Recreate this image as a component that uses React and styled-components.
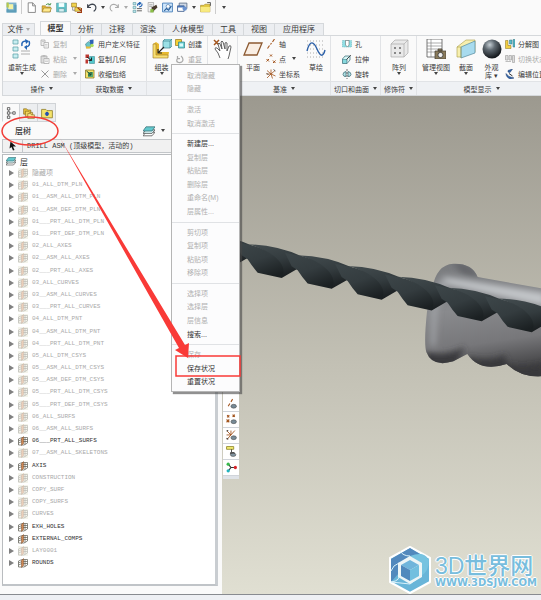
import React from 'react';
import styled, { createGlobalStyle, css } from 'styled-components';

const GlobalStyle = createGlobalStyle`
  * {
    box-sizing: border-box;
  }

  body {
    margin: 0;
    background: #fafafa;
    color: #3a3a3a;
    font-family: "Liberation Sans", "Noto Sans CJK SC", sans-serif;
    font-size: 7px;
  }

  button, select {
    margin: 0;
    padding: 0;
    border: 0;
    background: none;
    color: inherit;
    font: inherit;
  }

  svg {
    display: block;
    flex: none;
  }
`;

/* ---------- icons ---------- */

const art = {
  app: <><path d="M1 1h18v18H1z" fill="#7fb3cf" /><path d="M4 4h9v9H4z" fill="#f4f3a4" /><path d="M1 13h4v2h10V5h4v14H1z" fill="#5d9db8" /><path d="M1 1h4v9H1z" fill="#b6c84d" /></>,
  file: <path d="M4 1.500h8l5 5V19H4zM12 1.500V7h5" fill="#fff" stroke="#777" strokeWidth="1.500" />,
  open: <><path d="M2 7h6l2 2h7v9H2z" fill="#e8b93a" stroke="#8c6d1b" /><path d="M5 11h14l-3 7H2z" fill="#ffe98c" stroke="#8c6d1b" /><path d="M9 5q4-4 8 0l1-3M17 5l-4 0" stroke="#3b8a3b" fill="none" strokeWidth="1.500" /></>,
  save: <><path d="M1 2h18v16H1z" fill="#5fc4c9" stroke="#4f8f98" /><path d="M5 2h10v7H5z" fill="#f2ffff" /><path d="M5 12h10v6H5z" fill="#d5eef0" stroke="#4f8f98" /></>,
  tree: <><path d="M1 2h9v7H1zM7 10h10v7H7z" fill="#f0d24d" stroke="#8c6d1b" /><path d="M12 10l7 7M19 11v8h-8" stroke="#a03c14" fill="none" strokeWidth="2" /><path d="M3 9v6h4" stroke="#555" fill="none" /></>,
  undo: <path d="M3 4v6h6M3 10Q6 4 12 4q6 1 6 7 0 4-4 6" fill="none" stroke="#3f4650" strokeWidth="2.200" />,
  redo: <path d="M17 4v6h-6M17 10Q14 4 8 4q-6 1-6 7 0 4 4 6" fill="none" stroke="#aaa" strokeWidth="2" />,
  regen: <><path d="M2 1h5v4H2zM2 8h5v4H2zM2 15h5v4H2z" fill="#bfe9ee" stroke="#4a8b94" /><path d="M9 12h9M9 16h9" stroke="#444" strokeWidth="1.500" /><path d="M10 7q0-5 5-5M13 0l3 2-3 3M18 3q1 5-5 6" fill="none" stroke="#2464b4" strokeWidth="2" /></>,
  pencil: <><path d="M2 1h10v17H2z" fill="#f1f1f1" stroke="#888" /><path d="M4 5h6M4 8h6" stroke="#777" /><path d="M8 10l9-5 2 5-9 8z" fill="#4a3c2f" /><path d="M6 13h6v6H6z" fill="#8abf47" /></>,
  fit: <><path d="M1 2h18v16H1z" fill="#cfe6fb" stroke="#3c77b5" strokeWidth="1.500" /><circle cx="11" cy="8" r="3.500" fill="#fff" stroke="#2b5f9a" /><path d="M4 16l4-4 4 3 5-8" fill="none" stroke="#2b5f9a" strokeWidth="2" /></>,
  windows: <><path d="M4 2h14v10H4z" fill="#cfd9e6" stroke="#5a6c86" strokeWidth="1.500" /><path d="M1 7h12v10H1z" fill="#fff" stroke="#38588a" strokeWidth="1.500" /><path d="M1 7h12v3H1z" fill="#4773b6" /><circle cx="14" cy="12" r="4" fill="#6b93cf" /></>,
  folder: <><path d="M1 6h6l2-2h9v14H1z" fill="#e2c843" stroke="#9b7d20" /><path d="M1 9h17v9H1z" fill="#f8ea80" /><path d="M13 1h6v6" fill="none" stroke="#444" strokeWidth="1.500" /></>,
  copy: <><path d="M2 2h8v11H2z" fill="#eee" stroke="#aaa" strokeWidth="1.500" /><path d="M8 7h9v11H8z" fill="#f7f7f7" stroke="#aaa" strokeWidth="1.500" /><path d="M10 11h5M10 14h5M4 5h4" stroke="#aaa" /></>,
  paste: <><path d="M2 4h12v14H2z" fill="#ddd" stroke="#aaa" strokeWidth="1.500" /><path d="M5 2h6v4H5z" fill="#bbb" /><path d="M8 9h10v10H8z" fill="#fafafa" stroke="#aaa" strokeWidth="1.500" /><path d="M10 12h6M10 15h6" stroke="#aaa" /></>,
  cross: <path d="M3 3l14 14M17 3L3 17" stroke="#999" strokeWidth="2" />,
  feature: <><path d="M1 10l6-5 6 4-2 8-8 1z" fill="#69c3c8" stroke="#41727c" /><path d="M9 2l8-1v8l-6 3z" fill="#2c62b4" /><path d="M2 15h9v4H2z" fill="#e7bb36" /><circle cx="14" cy="13" r="3.500" fill="#a9dd5a" /></>,
  copyGeo: <><path d="M1 1h7v7H1zM1 11h5v8H1z" fill="#bd3830" /><path d="M9 5h10v14H9z" fill="#54c7cb" stroke="#317f88" /><path d="M4 6l9 7M13 7v6H7" stroke="#222" strokeWidth="2" fill="none" /></>,
  shrink: <><path d="M1 2h17v16H1z" fill="#f4e36c" stroke="#86711f" strokeWidth="1.500" /><path d="M6 6h10v10H6z" fill="#58a86f" /><path d="M3 4l9 8M12 6v6H6" stroke="#1a4734" strokeWidth="2" fill="none" /></>,
  create: <><path d="M1 1h12v12H1z" fill="#f4cf34" stroke="#9b7d20" strokeWidth="1.500" /><path d="M7 6h12v12H7z" fill="#6cd2d6" stroke="#38858b" strokeWidth="1.500" /><path d="M9 9h7v6H9z" fill="#d8fafa" /></>,
  repeat: <path d="M5 4v5h5M5 9Q1 15 7 17q8 1 9-5 0-5-4-8" fill="none" stroke="#aaa" strokeWidth="2.500" />,
  axis: <path d="M3 19l4-6M9 11l2-3M13 6l4-6" stroke="#a3541c" strokeWidth="2.200" />,
  points: <path d="M8 1l4 4m0-4L8 5M1 10l5 5m0-5l-5 5M14 13l5 5m0-5l-5 5" stroke="#a3541c" strokeWidth="2" />,
  csys: <><path d="M10 10L2 3M10 10l8-7M10 10l9 4M10 10l-8 8M10 10l3 9M10 10H1M10 10V1" stroke="#a3541c" strokeWidth="1.600" /><path d="M1 8l4 4M15 1l4 3" stroke="#333" strokeWidth="1.500" /></>,
  hole: <><path d="M1 3h18v13H1z" fill="#91dfe5" stroke="#5eb1bb" strokeDasharray="3 1" /><path d="M7 3h7v9l-3 4-4-4z" fill="#fff" stroke="#555" /></>,
  extrude: <><path d="M1 10h9v9H1z" fill="#86d9de" stroke="#40727c" strokeWidth="1.500" /><path d="M1 10l5-6h10l-6 6M10 19l6-7V4" fill="#d6f6f6" stroke="#40727c" strokeWidth="1.500" /><path d="M9 11l9-9" stroke="#333" strokeWidth="1.500" /></>,
  revolve: <><path d="M8 5Q2 6 2 11q1 5 6 4V5M12 5q6 1 6 6-1 5-6 4z" fill="#b2e3e6" stroke="#3d6b76" strokeWidth="1.500" /><path d="M10 0v20" stroke="#444" strokeDasharray="4 2" strokeWidth="1.500" /></>,
  explode: <><path d="M1 3h5v10h6v6H1z" fill="#f2cf43" stroke="#876b1a" /><path d="M9 2h5v8H9zM16 1h4v15h-4z" fill="#58bbc8" stroke="#33727e" /></>,
  toggle: <path d="M1 3h5v9H1zM8 3h5v9H8zM15 3h4v14h-4zM1 15h11" fill="#ddd" stroke="#aaa" strokeWidth="1.500" />,
  editPos: <><path d="M6 3l9-3-5 7-4-1zM2 9l6 6 10 3-7 2Q2 17 2 9z" fill="#3367ab" stroke="#1e3b6d" /><path d="M8 9l7 5" stroke="#333" strokeWidth="2" /></>,
  layers: <><path d="M5 12h15l-5 6H0z" fill="#fff" stroke="#444" strokeWidth="1.200" /><path d="M5 8h15l-5 6H0z" fill="#d7f4f5" stroke="#444" strokeWidth="1.200" /><path d="M5 3h15l-5 7H0z" fill="#63c8cd" stroke="#356b72" strokeWidth="1.200" /></>,
  structure: <><path d="M6 3v14M6 10h9" stroke="#555" /><path d="M4 1h4v4H4zM4 8h4v4H4zM4 15h4v4H4zM13 8h4v4h-4z" fill="#fff" stroke="#444" strokeWidth="1.300" /></>,
  folders: <><path d="M1 3h5l2 2h5v7H1z" fill="#e8c23a" stroke="#7b621a" /><path d="M4 7h5l2 2h5v7H4z" fill="#f1d45a" stroke="#7b621a" /><path d="M8 11h5l1 2h5v6H8z" fill="#f9e88d" stroke="#7b621a" /></>,
  favorite: <><path d="M1 4h7l2 2h9v12H1z" fill="#f5e36a" stroke="#8c7a25" strokeWidth="1.300" /><path d="M10 8v7M6.500 11.500h7M8 9l4 5M12 9l-4 5" stroke="#2450b0" strokeWidth="1.800" /></>,
  cursor: <path d="M5 1l11 10h-6l3 7-3 1-3-7-4 3z" fill="#111" />,
  layer: <><path d="M1 6l7-3h11v11l-7 4H1zM1 10l7-3h11M1 14l7-3h11M14 3v14" fill="none" stroke="#4d4d42" strokeWidth="1.300" /><path d="M7 5l4-4v14l-4 4z" fill="#cf8753" stroke="#7d4f2d" /></>,
  eyeAxis: <><path d="M4 15l3-5M9 7l3-5" stroke="#a3541c" strokeWidth="2" /><ellipse cx="14" cy="15" rx="5" ry="3.500" fill="#778b97" stroke="#444" /></>,
  eyePoints: <><path d="M2 2l4 4m0-4L2 6M12 1l4 4m0-4l-4 4M1 10l5 5m0-5l-5 5" stroke="#a3541c" strokeWidth="2" /><ellipse cx="14" cy="14" rx="5" ry="3.500" fill="#778b97" stroke="#444" /></>,
  eyeCsys: <><path d="M9 9L2 2M9 9l7-8M9 9l-7 8M9 9H1M9 9V1" stroke="#a3541c" strokeWidth="1.600" /><path d="M1 2l3-1M1 15l3 2" stroke="#333" strokeWidth="2" /><ellipse cx="14" cy="14" rx="5" ry="3.500" fill="#778b97" stroke="#444" /></>,
  eyePlane: <><path d="M1 1h13v5H1z" fill="#f3ed73" stroke="#8e8428" strokeWidth="1.500" /><path d="M10 6v6" stroke="#333" strokeWidth="1.500" /><path d="M8 11h7l2 4H7z" fill="#555" /><ellipse cx="13" cy="16" rx="5" ry="3" fill="#8295a1" stroke="#444" /></>,
  spin: <><path d="M4 4l5 6-5 6M9 10h8" stroke="#333" strokeWidth="2" fill="none" /><circle cx="4" cy="4" r="3" fill="#37b94a" /><circle cx="4" cy="16" r="3" fill="#22b2bd" /><circle cx="17" cy="10" r="3" fill="#d8232a" /></>,
  /* large ribbon icons */
  regenBig: <><path d="M1 1h5v4H1zM1 8h5v4H1zM1 15h5v4H1z" fill="#c8eef1" stroke="#62a5ac" strokeWidth=".8" /><path d="M9 12h9M9 15h9" stroke="#999" strokeWidth=".8" /><path d="M10 7q-1-5 4-5M17 2q2 5-3 6" fill="none" stroke="#2464b4" strokeWidth="1.500" /><path d="M13 0l4 2-3 3zM15 6v5l-3-3z" fill="#2464b4" /></>,
  assemble: <><path d="M1 5l3-2 3 2v8h10l-1 6H1z" fill="#e7b92f" /><path d="M1 5h3v11h12v3H1z" fill="#f8df70" stroke="#9b7726" strokeWidth=".6" /><path d="M11 2l2-2h7v7l-2 2h-7z" fill="#9ae0e6" stroke="#3c7f8a" strokeWidth=".7" /><path d="M11 2h7v7M18 2l2-2" fill="none" stroke="#3c7f8a" strokeWidth=".7" /><path d="M12 8l-6 6M6 10v4h4" fill="none" stroke="#222" strokeWidth="1.100" /></>,
  hand: <><path d="M1 1l5 5M6 1L1 6" stroke="#a3541c" strokeWidth="1.500" /><path d="M7 19l-2-5-3-4q0-2 2-1l3 3-2-7q1-2 2 0l2 5-1-7q1-2 2 0l2 7V4q1-1 2 0v8l2-5q2-1 2 1l-2 9-1 3" fill="#fff" stroke="#555" strokeWidth=".9" /></>,
  plane: <path d="M6 4h13l-5 12H1z" fill="#f9eee4" stroke="#8c5a32" strokeWidth="1.300" />,
  sketch: <><path d="M1 2h18M1 6h18M1 10h18M1 14h18M1 18h18" stroke="#999" strokeWidth=".8" strokeDasharray="1 2" /><path d="M1 12C4 0 8 3 11 10s6 9 8 1" fill="none" stroke="#2b5fa8" strokeWidth="1.400" /></>,
  pattern: <><path d="M2 5l4-4h13v13l-4 4H2z" fill="#e9e9e9" stroke="#aaa" strokeWidth=".7" /><path d="M2 5h13v13M15 5l4-4" fill="none" stroke="#aaa" strokeWidth=".7" /><path d="M5 8h2v2H5zM10 8h2v2h-2zM5 13h2v2H5zM10 13h2v2h-2z" fill="#888" /></>,
  viewManager: <><path d="M1 0h15v18H1z" fill="#fff" stroke="#555" strokeWidth=".8" /><path d="M1 4h15M1 7h15M1 10h15M1 13h15M5 0v18" stroke="#777" strokeWidth=".6" /><path d="M9 12h11v8H9zM12 10h4v2h-4z" fill="#8a7b5b" stroke="#443e30" strokeWidth=".7" /><circle cx="14.500" cy="16" r="2.600" fill="#eee" stroke="#333" strokeWidth=".8" /></>,
  section: <><path d="M1 8l9-7h9v12L5 18H1z" fill="#f7efae" stroke="#a89a45" strokeWidth=".6" /><path d="M5 8l14-6v12L5 19z" fill="#a8dbee" stroke="#55899e" strokeWidth=".7" /><path d="M1 8h4v11" fill="none" stroke="#a89a45" strokeWidth=".6" /></>,
  sphere: <><defs><radialGradient id="ball" cx=".38" cy=".28" r=".7"><stop offset="0" stopColor="#c5ced4" /><stop offset=".4" stopColor="#606a72" /><stop offset="1" stopColor="#15191d" /></radialGradient></defs><circle cx="10" cy="10" r="9.500" fill="url(#ball)" /></>,
};

const Icon = ({ name, size = 10 }) => (
  <svg width={size} height={size} viewBox="0 0 20 20" fill="none" aria-hidden="true">
    {art[name]}
  </svg>
);

const Caret = styled.span`
  width: 0;
  height: 0;
  border: 2px solid transparent;
  border-top: 3px solid ${({ $muted }) => ($muted ? '#aaa' : '#444')};
  border-bottom: 0;
`;

/* ---------- page ---------- */

const Page = styled.div`
  position: relative;
  display: flex;
  flex-direction: column;
  min-height: 100vh;
  overflow: hidden;
`;

const QuickBar = styled.header`
  display: flex;
  align-items: center;
  gap: 4px;
  height: 14px;
  margin-bottom: 7px;
  padding-left: 6px;

  button {
    display: flex;
  }
`;

const Divider = styled.span`
  width: 1px;
  height: 14px;
  margin-right: ${({ $wide }) => ($wide ? '2px' : '0')};
  background: #ccc;
`;

const TabStrip = styled.nav`
  display: flex;
  align-items: flex-end;
  height: 14px;
  padding-left: 2px;
`;

const Tab = styled.button`
  display: flex;
  align-items: center;
  justify-content: center;
  gap: 2px;
  width: ${({ $wide }) => ($wide ? '49px' : '31px')};
  height: 12px;
  border-top: 1px solid #d5d8db;
  border-right: 1px solid #d5d8db;
  background: #eceef1;
  font-size: 8px;
  line-height: 10px;
  white-space: nowrap;

  ${({ $file }) => $file && css`
    width: 33px;
    margin-right: 5px;
    border-left: 1px solid #d5d8db;
  `}

  ${({ $active }) => $active && css`
    height: 14px;
    border-left: 1px solid #d5d8db;
    background: #fafafa;
    font-weight: 700;
  `}
`;

const Ribbon = styled.section`
  display: flex;
  height: 61px;
  margin-left: 2px;
  border: 1px solid #d5d8db;
  border-right: 0;
  overflow: hidden;
`;

const Group = styled.div`
  display: flex;
  flex-direction: column;
  flex: ${({ $width }) => ($width ? `0 0 ${$width}px` : '1 0 124px')};
  border-right: 1px solid #e1e3e6;
`;

const GroupBody = styled.div`
  display: flex;
  flex: 1;
  gap: 3px;
  padding-left: ${({ $indent }) => $indent || 4}px;
`;

const GroupTitle = styled.div`
  display: flex;
  align-items: center;
  justify-content: center;
  gap: 4px;
  height: 14px;
  border-top: 1px solid #e1e3e6;
  background: #eff1f4;
  font-size: 7px;
  white-space: nowrap;
`;

const BigButton = styled.button`
  display: flex;
  flex-direction: column;
  align-items: center;
  width: ${({ $width }) => $width || 20}px;
  padding-top: 3px;
  line-height: 8px;
  white-space: nowrap;

  svg {
    margin-bottom: 5px;
  }
`;

const Column = styled.div`
  display: flex;
  flex-direction: column;
`;

const SmallButton = styled.button`
  display: flex;
  flex: 1;
  align-items: center;
  gap: 3px;
  color: ${({ disabled }) => (disabled ? '#aaa' : '#3a3a3a')};
  white-space: nowrap;

  ${Caret} {
    margin-left: 3px;
  }
`;

const Workspace = styled.main`
  display: flex;
  flex: 1;
`;

const Sidebar = styled.aside`
  display: flex;
  flex-direction: column;
  flex: 0 0 222px;
  padding: 7px 4px 8px 2px;
`;

const PanelTabs = styled.div`
  display: flex;
  height: 19px;
  flex: none;
`;

const PanelTab = styled.button`
  display: flex;
  align-items: center;
  justify-content: center;
  width: 18px;
  border: 1px solid #d0d3d6;
  border-left-width: ${({ $active }) => ($active ? '1px' : '0')};
  border-bottom-color: ${({ $active }) => ($active ? '#fafafa' : '#d0d3d6')};
  background: ${({ $active }) => ($active ? '#fafafa' : '#eceef0')};
`;

const PanelHead = styled.div`
  display: flex;
  align-items: center;
  gap: 6px;
  height: 17px;
  padding: 0 43px 0 13px;

  h2 {
    flex: 1;
    margin: 0;
    font-size: 8px;
    font-weight: 500;
  }
`;

const ModelRow = styled.div`
  display: flex;
  height: 14px;
  border: 1px solid #c3c6c9;
  background: #f1f1f1;

  button {
    display: flex;
    align-items: center;
    justify-content: center;
    width: 20px;
    border-right: 1px solid #c3c6c9;
  }
`;

const ModelSelect = styled.select`
  flex: 1;
  appearance: none;
  padding-left: 4px;
  font-family: "Liberation Mono", "Noto Sans CJK SC", monospace;
  font-size: 7px;
`;

const Tree = styled.ul`
  display: flex;
  flex: 1;
  flex-direction: column;
  margin: 1px 0 0;
  padding: 0 0 15px;
  border: 1px solid #b9bcbf;
  border-right: 3px solid #c9cdd1;
  border-bottom: 2px solid #c0c4c8;
  background: #fff;
  list-style: none;
  font-family: "Liberation Mono", "Noto Sans CJK SC", monospace;
  font-size: 6px;
`;

const TreeRoot = styled.li`
  display: flex;
  align-items: center;
  gap: 4px;
  height: 12px;
  padding-left: 3px;
  font-size: 8px;
`;

const TreeRow = styled.li`
  display: flex;
  flex: 1 1 12px;
  align-items: center;
  gap: 4px;
  padding-left: 6px;
  color: ${({ $shown }) => ($shown ? '#333' : '#aaa')};
  font-size: ${({ $chinese }) => ($chinese ? '7px' : '6px')};
  line-height: 8px;

  svg {
    background: ${({ $shown }) => ($shown ? 'none' : '#e6e6cf')};
    opacity: ${({ $shown }) => ($shown ? 1 : 0.4)};
  }
`;

const Expander = styled.button`
  width: 0;
  height: 0;
  border: 3px solid transparent;
  border-left: 5px solid #808080;
  border-right: 0;
`;

const Viewport = styled.section`
  position: relative;
  flex: 1;
  min-width: 0;
  background: linear-gradient(#9c998f, #c3c1b5 55%, #e0dfd2);
  overflow: hidden;
`;

const Model = styled.svg`
  position: absolute;
  top: 0;
  left: 0;
  width: 100%;
`;

const DisplayBar = styled.div`
  position: absolute;
  top: 296px;
  left: 1px;
  width: 16px;
  padding-top: 4px;
  border-bottom: 3px solid #dfe3e8;
  background: #fff;

  button {
    display: flex;
    align-items: center;
    justify-content: center;
    width: 16px;
    height: 16px;
    border-bottom: 1px solid #d0d4da;
  }
`;

const Watermark = styled.div`
  position: absolute;
  right: 4px;
  bottom: 0;
  display: flex;
  align-items: center;
  gap: 3px;
  color: #78bddd;
  text-shadow: 1px 0 #fff, -1px 0 #fff, 0 1px #fff, 0 -1px #fff;
  white-space: nowrap;

  strong {
    display: block;
    font-size: 23px;
    font-weight: 500;
    line-height: 24px;
  }

  small {
    display: block;
    font: 700 10px/9px "DejaVu Sans", sans-serif;
  }
`;

const StatusBar = styled.footer`
  height: 6px;
  border-top: 1px solid #888b90;
  background: #eef0f4;
`;

const Menu = styled.div`
  position: absolute;
  top: 64px;
  left: 171px;
  display: flex;
  flex-direction: column;
  width: 69px;
  height: 328px;
  padding: 4px 0 2px;
  border: 1px solid #b5b5b5;
  background: #fcfcfd;
  box-shadow: 2px 2px 1px rgba(70, 70, 70, 0.6);

  hr {
    flex: 0 0 1px;
    width: 100%;
    margin: 3px 0;
    border: 0;
    background: #e0e2e5;
  }
`;

const MenuItem = styled.button`
  flex: 1;
  padding-left: 15px;
  color: ${({ disabled }) => (disabled ? '#b0b0b0' : '#333')};
  font-size: 7px;
  line-height: 8px;
  text-align: left;
`;

const Marks = styled.svg`
  position: absolute;
  top: 0;
  left: 0;
  pointer-events: none;
`;

/* ---------- data ---------- */

const tabs = ['分析', '注释', '渲染', '人体模型', '工具', '视图', '应用程序'];

const layers = [
  '隐藏项', '01_ALL_DTM_PLN', '01__ASM_ALL_DTM_PLN', '01__ASM_DEF_DTM_PLN',
  '01___PRT_ALL_DTM_PLN', '01___PRT_DEF_DTM_PLN', '02_ALL_AXES', '02__ASM_ALL_AXES',
  '02___PRT_ALL_AXES', '03_ALL_CURVES', '03__ASM_ALL_CURVES', '03___PRT_ALL_CURVES',
  '04_ALL_DTM_PNT', '04__ASM_ALL_DTM_PNT', '04___PRT_ALL_DTM_PNT', '05_ALL_DTM_CSYS',
  '05__ASM_ALL_DTM_CSYS', '05__ASM_DEF_DTM_CSYS', '05___PRT_ALL_DTM_CSYS',
  '05___PRT_DEF_DTM_CSYS', '06_ALL_SURFS', '06__ASM_ALL_SURFS', '06___PRT_ALL_SURFS',
  '07__ASM_ALL_SKELETONS', 'AXIS', 'CONSTRUCTION', 'COPY_SURF', 'COPY_SURFS', 'CURVES',
  'EXH_HOLES', 'EXTERNAL_COMPS', 'LAY0001', 'ROUNDS',
];

const shownLayers = ['06___PRT_ALL_SURFS', 'AXIS', 'EXH_HOLES', 'EXTERNAL_COMPS', 'ROUNDS'];

const menuGroups = [
  ['取消隐藏', '隐藏'],
  ['激活', '取消激活'],
  ['新建层...', '复制层', '粘贴层', '删除层', '重命名(M)', '层属性...'],
  ['剪切项', '复制项', '粘贴项', '移除项'],
  ['选择项', '选择层', '层信息', '搜索...'],
  ['保存', '保存状况', '重置状况'],
];

const enabledItems = ['新建层...', '搜索...', '保存状况', '重置状况'];

/* ---------- parts ---------- */

const Quick = ({ icon, label }) => (
  <button aria-label={label}><Icon name={icon} size={11} /></button>
);

const Small = ({ icon, children, caret, disabled }) => (
  <SmallButton disabled={disabled}>
    <Icon name={icon} size={10} />
    {children}
    {caret && <Caret $muted={disabled} />}
  </SmallButton>
);

const Big = ({ icon, children, caret, width }) => (
  <BigButton $width={width} aria-label={children ? undefined : icon}>
    <Icon name={icon} size={20} />
    {children}
    {caret && <Caret />}
  </BigButton>
);

const RibbonGroup = ({ title, width, indent, children }) => (
  <Group $width={width}>
    <GroupBody $indent={indent}>{children}</GroupBody>
    <GroupTitle>{title && <>{title}<Caret /></>}</GroupTitle>
  </Group>
);

const twists = [-1, 0, 1, 2, 3, 4, 5];

const DrillModel = () => (
  <Model viewBox="222 96 319 498" aria-label="DRILL">
    <defs>
      <linearGradient id="body" x1="0" y1="0" x2=".15" y2="1">
        <stop offset="0" stopColor="#77797c" />
        <stop offset=".45" stopColor="#898a8d" />
        <stop offset=".75" stopColor="#77777a" />
        <stop offset="1" stopColor="#424244" />
      </linearGradient>
      <linearGradient id="front" x1=".2" y1="0" x2=".7" y2="1">
        <stop offset="0" stopColor="#3c4548" />
        <stop offset=".5" stopColor="#343c3f" />
        <stop offset="1" stopColor="#1b2022" />
      </linearGradient>
      <linearGradient id="back" x1=".2" y1="0" x2=".6" y2="1">
        <stop offset="0" stopColor="#424b4e" />
        <stop offset=".5" stopColor="#343c3f" />
        <stop offset="1" stopColor="#191d1f" />
      </linearGradient>
      <filter id="soft"><feGaussianBlur stdDeviation="9" /></filter>
      <clipPath id="shell">
        <path d="M592 175Q604 104 655 101Q712 99 728 141L930 177V438Q860 446 815 402Q735 428 697 372L655 394Q592 413 574 366Q566 340 576 245Z" />
      </clipPath>
    </defs>
    <g transform="translate(235 230) scale(.3333)">
      <g clipPath="url(#shell)">
        <path d="M560 90H930V450H560z" fill="url(#body)" />
        <g filter="url(#soft)">
          <path d="M625 140L930 190V228L620 160z" fill="#c3c6c9" />
          <path d="M592 190Q615 140 640 150L606 240 600 350 588 345z" fill="#a2a4a8" />
          <path d="M650 95Q715 96 735 145L680 130z" fill="#626467" />
          <path d="M570 365Q630 385 690 350L660 410H570zM700 380Q760 400 810 375L820 430H700zM815 405Q870 420 930 400V455H815z" fill="#38383a" />
        </g>
      </g>
      {twists.map((n) => (
        <g key={n} transform={`translate(${n * 150} ${n * 32.5})`}>
          <path d="M38 43Q125 45 200 79L206 108 185 118 140 144C140 105 105 57 38 43Z" fill="url(#back)" />
          <path d="M0 36L45 45C105 57 165 105 140 144L68 128Q52 110 38 88L20 76Z" fill="url(#front)" />
        </g>
      ))}
    </g>
  </Model>
);

const Logo = () => (
  <svg width="44" height="48" viewBox="0 0 44 48" aria-hidden="true">
    <path d="M22 1l20 11v24L22 47 2 36V12z" fill="#69b5d8" stroke="#fff" strokeWidth="2" strokeLinejoin="round" />
    <path d="M22 2L3 13v23l8-9V17l11-7 18 3z" fill="#5289bd" />
    <path d="M40 13Q36 5 22 10l11 7v13q8-4 8-17z" fill="#77c3e0" />
    <path d="M33 17v13l-11 8-19-2q10-1 8-9M11 17Q5 19 3 25M22 10Q15 10 12 5" fill="none" stroke="#d9f1fa" />
    <path d="M22 10l12 7v14l-12 7-12-7V17z" fill="#edf5f6" />
    <path d="M22 14l9 5-9 5-9-5z" fill="#70b5db" />
    <path d="M13 19l9 5v11l-9-5z" fill="#5089bd" />
    <path d="M31 19l-9 5v11l9-5z" fill="#72bfdf" />
  </svg>
);

const App = () => (
  <Page>
    <GlobalStyle />
    <QuickBar>
      <Quick icon="app" label="应用" />
      <Divider />
      <Quick icon="file" label="新建" />
      <Quick icon="open" label="打开" />
      <Quick icon="save" label="保存" />
      <Quick icon="tree" label="关闭" />
      <Quick icon="undo" label="撤消" />
      <Caret />
      <Quick icon="redo" label="重做" />
      <Caret $muted />
      <Quick icon="regen" label="重新生成" />
      <Quick icon="pencil" label="编辑" />
      <Quick icon="fit" label="查找" />
      <Quick icon="windows" label="窗口" />
      <Caret />
      <Quick icon="folder" label="工作目录" />
      <Divider $wide />
      <Caret />
    </QuickBar>

    <TabStrip>
      <Tab $file>文件<Caret $muted /></Tab>
      <Tab $active>模型</Tab>
      {tabs.map((tab) => (
        <Tab key={tab} $wide={tab.length > 2}>{tab}</Tab>
      ))}
    </TabStrip>

    <Ribbon>
      <RibbonGroup title="操作" width={78}>
        <Big icon="regenBig" width={30} caret>重新生成</Big>
        <Column>
          <Small icon="copy" disabled>复制</Small>
          <Small icon="paste" disabled caret>粘贴</Small>
          <Small icon="cross" disabled caret>删除</Small>
        </Column>
      </RibbonGroup>
      <RibbonGroup title="获取数据" width={66}>
        <Column>
          <Small icon="feature">用户定义特征</Small>
          <Small icon="copyGeo">复制几何</Small>
          <Small icon="shrink">收缩包络</Small>
        </Column>
      </RibbonGroup>
      <RibbonGroup width={61}>
        <Big icon="assemble" width={21} caret>组装</Big>
        <Column>
          <Small icon="create">创建</Small>
          <Small icon="repeat" disabled>重复</Small>
          <SmallButton disabled aria-label="镜像元件" />
        </Column>
      </RibbonGroup>
      <RibbonGroup width={30} indent={5}>
        <Big icon="hand" />
      </RibbonGroup>
      <RibbonGroup title="基准" width={93} indent={5}>
        <Big icon="plane">平面</Big>
        <Column>
          <Small icon="axis">轴</Small>
          <Small icon="points" caret>点</Small>
          <Small icon="csys">坐标系</Small>
        </Column>
        <Big icon="sketch" width={26}>草绘</Big>
      </RibbonGroup>
      <RibbonGroup title="切口和曲面" width={50} indent={11}>
        <Column>
          <Small icon="hole">孔</Small>
          <Small icon="extrude">拉伸</Small>
          <Small icon="revolve">旋转</Small>
        </Column>
      </RibbonGroup>
      <RibbonGroup title="修饰符" width={36} indent={8}>
        <Big icon="pattern" caret>阵列</Big>
      </RibbonGroup>
      <RibbonGroup title="模型显示" indent={4}>
        <Big icon="viewManager" width={30} caret>管理视图</Big>
        <Big icon="section" width={24} caret>截面</Big>
        <Big icon="sphere" width={21}>
          外观<br />库 ▾
        </Big>
        <Column>
          <Small icon="explode">分解图</Small>
          <Small icon="toggle" disabled>切换状态</Small>
          <Small icon="editPos">编辑位置</Small>
        </Column>
      </RibbonGroup>
    </Ribbon>

    <Workspace>
      <Sidebar>
        <PanelTabs>
          <PanelTab $active aria-label="模型树"><Icon name="structure" size={12} /></PanelTab>
          <PanelTab aria-label="文件夹"><Icon name="folders" size={12} /></PanelTab>
          <PanelTab aria-label="收藏夹"><Icon name="favorite" size={12} /></PanelTab>
        </PanelTabs>
        <PanelHead>
          <h2>层树</h2>
          <Icon name="layers" size={12} />
          <Caret />
          <span>»</span>
        </PanelHead>
        <ModelRow>
          <button aria-label="选择"><Icon name="cursor" size={10} /></button>
          <ModelSelect aria-label="活动模型">
            <option>DRILL ASM (顶级模型，活动的)</option>
          </ModelSelect>
        </ModelRow>
        <Tree>
          <TreeRoot><Icon name="layers" size={10} />层</TreeRoot>
          {layers.map((layer, i) => (
            <TreeRow key={layer} $shown={shownLayers.includes(layer)} $chinese={i === 0}>
              <Expander aria-label={`展开 ${layer}`} />
              <Icon name="layer" size={10} />
              {layer}
            </TreeRow>
          ))}
        </Tree>
      </Sidebar>

      <Viewport>
        <DrillModel />
        <DisplayBar>
          <button aria-label="轴显示"><Icon name="eyeAxis" size={11} /></button>
          <button aria-label="点显示"><Icon name="eyePoints" size={11} /></button>
          <button aria-label="坐标系显示"><Icon name="eyeCsys" size={11} /></button>
          <button aria-label="平面显示"><Icon name="eyePlane" size={11} /></button>
          <button aria-label="旋转中心"><Icon name="spin" size={11} /></button>
        </DisplayBar>
        <Watermark>
          <Logo />
          <div>
            <strong>3D世界网</strong>
            <small>WWW.3DSJW.COM</small>
          </div>
        </Watermark>
      </Viewport>
    </Workspace>
    <StatusBar />

    <Menu>
      {menuGroups.map((items, i) => (
        <React.Fragment key={items[0]}>
          {i > 0 && <hr />}
          {items.map((item) => (
            <MenuItem key={item} disabled={!enabledItems.includes(item)}>{item}</MenuItem>
          ))}
        </React.Fragment>
      ))}
    </Menu>

    <Marks width="250" height="400" viewBox="0 0 250 400" fill="none" aria-hidden="true">
      <ellipse cx="30" cy="131" rx="28" ry="14" stroke="#f23c36" strokeWidth="1.500" />
      <path d="M60 138L185 345l4-2-1 15-13-8 4-2z" fill="#f93a37" />
      <path d="M176 356h64v20h-64z" stroke="#f93a37" strokeWidth="1.500" />
    </Marks>
  </Page>
);

export default App;
